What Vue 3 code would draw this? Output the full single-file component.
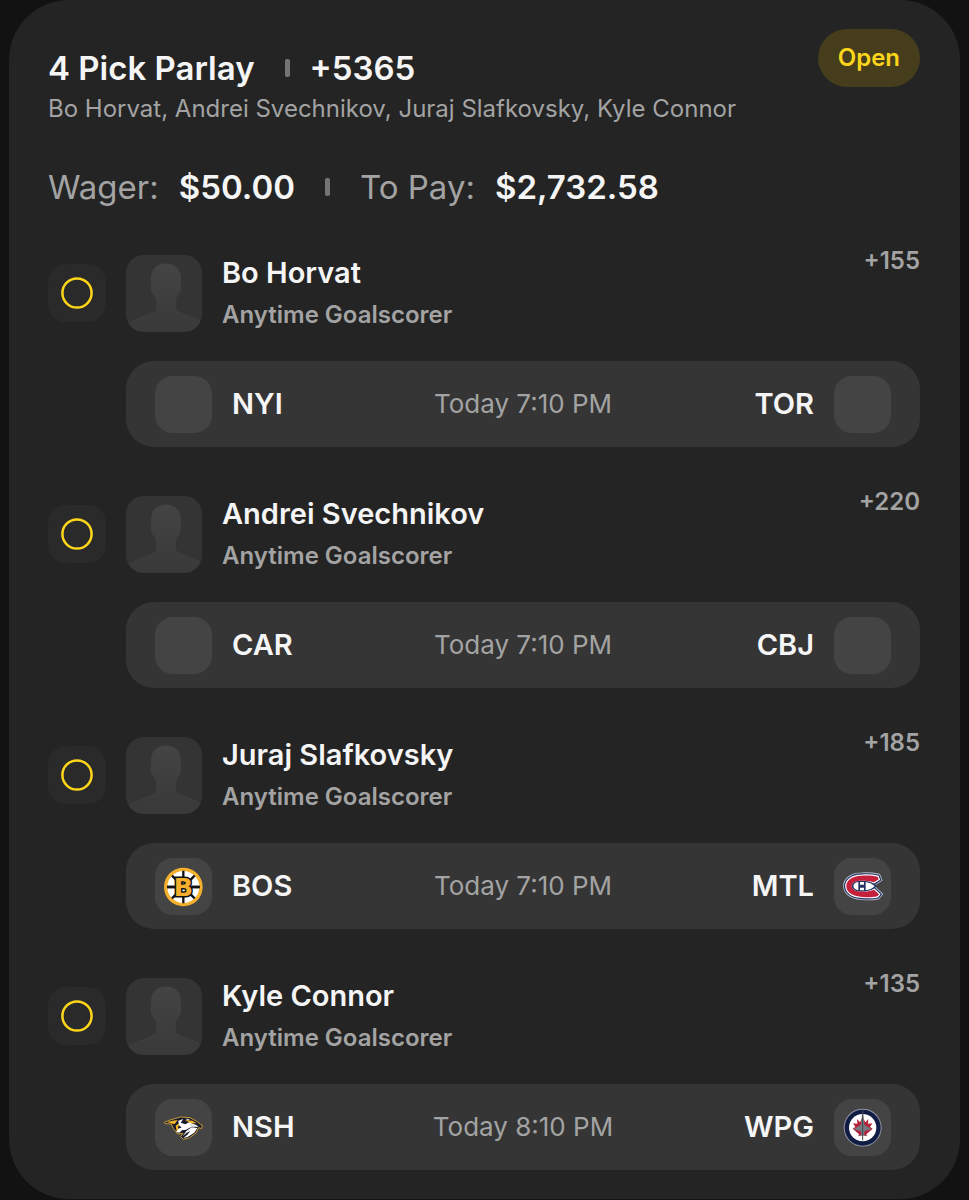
<script setup>
const bet = {
  title: '4 Pick Parlay',
  odds: '+5365',
  status: 'Open',
  wager: '$50.00',
  toPay: '$2,732.58',
};

const legs = [
  { player: 'Bo Horvat', market: 'Anytime Goalscorer', odds: '+155', away: 'NYI', home: 'TOR', time: 'Today 7:10 PM' },
  { player: 'Andrei Svechnikov', market: 'Anytime Goalscorer', odds: '+220', away: 'CAR', home: 'CBJ', time: 'Today 7:10 PM' },
  { player: 'Juraj Slafkovsky', market: 'Anytime Goalscorer', odds: '+185', away: 'BOS', home: 'MTL', time: 'Today 7:10 PM' },
  { player: 'Kyle Connor', market: 'Anytime Goalscorer', odds: '+135', away: 'NSH', home: 'WPG', time: 'Today 8:10 PM' },
];

const players = legs.map((leg) => leg.player).join(', ');

// outline of the Montreal "C", drawn several times for its borders
const habs =
  'M144 79L147 87L133 96C120 92 108 91 95 91C76 91 66 98 66 107C66 116 76 124 95 124C108 124 120 123 133 118L148 132L143 138C125 142 110 141 93 139C66 137 50 124 50 107C50 90 66 77 95 76C112 75 130 76 144 79Z';
</script>

<template>
  <main class="card">
    <header class="header">
      <div class="summary">
        <h1 class="title">
          <span>{{ bet.title }}</span>
          <i class="divider"></i>
          <span class="titleOdds">{{ bet.odds }}</span>
        </h1>
        <p class="players">{{ players }}</p>
      </div>
      <span class="status">{{ bet.status }}</span>
    </header>

    <div class="amounts">
      <span class="label">Wager:</span>
      <strong>{{ bet.wager }}</strong>
      <i class="divider"></i>
      <span class="label">To Pay:</span>
      <strong>{{ bet.toPay }}</strong>
    </div>

    <ul class="legs">
      <li v-for="leg in legs" :key="leg.player" class="leg">
        <div class="legHead">
          <div class="marker">
            <svg viewBox="0 0 32 32"><circle cx="16" cy="16" r="14.6" /></svg>
          </div>
          <svg class="avatar" viewBox="0 0 76 76">
            <defs>
              <linearGradient id="silhouette" x1="0" y1="0" x2="0" y2="1">
                <stop offset="0" stop-color="#444" />
                <stop offset="1" stop-color="#393939" />
              </linearGradient>
            </defs>
            <path
              fill="url(#silhouette)"
              d="M40 8C31 8 25 14 25 23V30C24 35 27 39 29 41C31 47 30 50 30 54C28 58 12 61 3 67L0 76H76L74 65C67 60 52 58 50 53C49 48 50 45 51 41C53 38 56 35 55 30V23C55 14 49 8 40 8Z"
            />
          </svg>
          <div class="pick">
            <h2>{{ leg.player }}</h2>
            <p>{{ leg.market }}</p>
          </div>
          <span class="legOdds">{{ leg.odds }}</span>
        </div>

        <div class="game">
          <div class="team">
            <span class="logo">
              <svg v-if="leg.away === 'BOS'" viewBox="14 23 171 171">
                <circle cx="99" cy="110" r="58" fill="#f4b02c" />
                <circle cx="99" cy="110" r="48" fill="#fff" />
                <path d="M99 61V159M50 110H148M65 76L133 144M133 76L65 144" stroke="#111" stroke-width="7" />
                <circle cx="99" cy="110" r="27" fill="#fff" />
                <path d="M50 110H78M120 110H148" stroke="#111" stroke-width="8" />
                <text class="bruins" x="99" y="138" text-anchor="middle">B</text>
              </svg>
              <svg v-if="leg.away === 'NSH'" viewBox="14 21 171 171">
                <path
                  d="M42 91L62 83L91 75L119 77L139 88L150 97L156 99L154 110L145 107L137 123L118 137L99 142L91 134L98 124L82 126L69 109L63 96L44 95Z"
                  fill="#171b2c" stroke="#c99a35" stroke-width="3" stroke-linejoin="round"
                />
                <path d="M50 90L67 86L82 84L73 96L66 95ZM76 101L88 92L83 107L90 116L79 118ZM104 84L126 86L139 94L121 94Z" fill="#f4b827" />
                <path
                  d="M84 86L99 81L91 92L105 97L116 91L139 100L145 104L124 104L107 113L95 115L87 122L77 120L87 109L94 107L86 100ZM108 117L124 106L141 108L132 122L113 134L99 138L111 128L120 117L109 122L97 133Z"
                  fill="#fff"
                />
                <path d="M106 80L119 81L112 86ZM119 96L135 100L121 101Z" fill="#c6c8cc" />
              </svg>
            </span>
            <b>{{ leg.away }}</b>
          </div>
          <span class="time">{{ leg.time }}</span>
          <div class="team">
            <b>{{ leg.home }}</b>
            <span class="logo">
              <svg v-if="leg.home === 'MTL'" viewBox="13 23 171 171">
                <path :d="habs" fill="none" stroke="#b9bfcc" stroke-width="19" />
                <path :d="habs" fill="none" stroke="#243363" stroke-width="14" />
                <path :d="habs" fill="none" stroke="#fff" stroke-width="7" />
                <path d="M66 107C66 98 76 91 95 91C112 91 130 94 141 107C130 121 112 124 95 124C76 124 66 116 66 107Z" fill="#243363" />
                <path :d="habs" fill="#c51f3c" />
                <path d="M71 107Q72 97 86 95V120Q72 117 71 107ZM91 95H103V103H91ZM91 112H103V120H91ZM108 95Q124 97 135 107Q124 118 108 120Z" fill="#fff" />
              </svg>
              <svg v-if="leg.home === 'WPG'" viewBox="13 21 171 171">
                <circle cx="99" cy="107" r="57" fill="#9095a3" />
                <circle cx="99" cy="107" r="54" fill="#101c43" />
                <circle cx="99" cy="107" r="41" fill="#fff" />
                <path
                  d="M99 75L91 91L82 81L83 95L70 94L77 105L69 110L88 127L86 133L99 130L112 133L110 127L129 110L121 105L128 94L115 95L116 81L107 91Z"
                  fill="#b4233b"
                />
                <path d="M99 52L103 86L104 98L126 112L105 117L103 126L111 132L99 130L87 132L95 126L93 117L72 112L94 98L95 86Z" fill="#747880" />
                <path d="M99 58V145" stroke="#41454f" stroke-width="3" />
              </svg>
            </span>
          </div>
        </div>
      </li>
    </ul>
  </main>
</template>

<style>
body {
  margin: 0;
  background: #121212;
}
</style>

<style scoped>
.card {
  margin: 0 9px;
  padding: 29px 40px 29px 39px;
  border-radius: 60px;
  background: #242424;
  color: #f5f5f5;
  font-family: Inter, "Liberation Sans", sans-serif;
}

h1,
h2,
p,
ul {
  margin: 0;
  padding: 0;
}

.header {
  display: flex;
  justify-content: space-between;
  align-items: flex-start;
}

.summary {
  padding-top: 18px;
}

.title {
  display: flex;
  align-items: center;
  font-size: 33px;
  line-height: 42px;
  font-weight: 600;
}

.divider {
  width: 5px;
  height: 18px;
  margin: 0 30px;
  border-radius: 2px;
  background: #747474;
}

.title .divider {
  margin-right: 20px;
}

.players {
  padding-top: 4px;
  font-size: 24px;
  line-height: 32px;
  color: #a3a3a3;
}

.status {
  padding: 0 20px;
  border-radius: 29px;
  background: #453d1c;
  color: #fdd51b;
  font-size: 24px;
  line-height: 58px;
  font-weight: 600;
}

.amounts {
  display: flex;
  align-items: center;
  padding: 41px 0 37px;
  font-size: 33px;
  line-height: 42px;
}

.amounts .label {
  margin-right: 20px;
  color: #a3a3a3;
}

.amounts strong {
  font-weight: 600;
}

.legs {
  display: flex;
  flex-direction: column;
  gap: 39px;
  list-style: none;
}

.legHead {
  display: flex;
  align-items: flex-end;
  gap: 20px;
  height: 87px;
}

.marker {
  display: flex;
  align-items: center;
  justify-content: center;
  width: 58px;
  height: 58px;
  margin-bottom: 10px;
  border-radius: 18px;
  background: #2a2a2a;
}

.marker svg {
  width: 32px;
  height: 32px;
  fill: none;
  stroke: #fdd51b;
  stroke-width: 2.5;
}

.avatar {
  width: 76px;
  height: 77px;
  border-radius: 18px;
  background: #343434;
}

.pick {
  flex: 1;
}

.pick h2 {
  font-size: 29px;
  line-height: 36px;
  font-weight: 600;
}

.pick p {
  padding: 9px 0 2px;
  font-size: 24px;
  line-height: 30px;
  font-weight: 600;
  color: #a3a3a3;
}

.legOdds {
  align-self: flex-start;
  font-size: 24px;
  line-height: 32px;
  font-weight: 600;
  color: #a3a3a3;
}

.game {
  display: grid;
  grid-template-columns: 1fr auto 1fr;
  align-items: center;
  height: 86px;
  margin: 29px 0 0 78px;
  padding: 0 29px;
  border-radius: 28px;
  background: #353535;
}

.team {
  display: flex;
  align-items: center;
  gap: 20px;
  font-size: 29px;
  line-height: 36px;
}

.team:last-child {
  justify-content: flex-end;
}

.team b {
  font-weight: 600;
}

.logo {
  width: 57px;
  height: 57px;
  border-radius: 18px;
  background: #444;
}

.logo svg {
  display: block;
}

.bruins {
  fill: #f4b02c;
  stroke: #111;
  stroke-width: 9px;
  paint-order: stroke;
  font: bold 76px "DejaVu Sans", sans-serif;
}

.time {
  font-size: 26px;
  line-height: 38px;
  color: #a3a3a3;
}
</style>
